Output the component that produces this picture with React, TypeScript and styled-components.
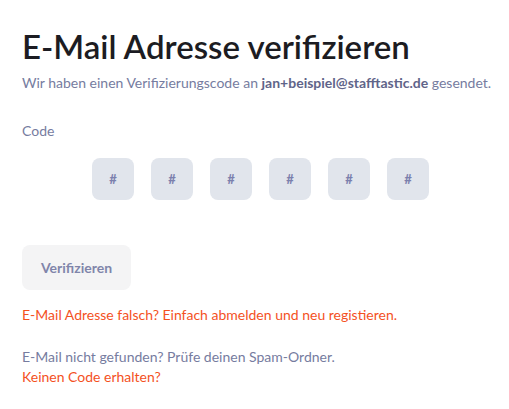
import React from "react";
import styled, { createGlobalStyle } from "styled-components";

const GlobalStyle = createGlobalStyle`
  html, body { margin: 0; padding: 0; background: #ffffff; }
  body { font-family: Lato, "Noto Sans", sans-serif; -webkit-font-smoothing: antialiased; }
`;

const Page = styled.main`
  padding: 27px 10px 0 22px;
  display: flex;
  flex-direction: column;
`;

const Title = styled.h1`
  margin: 0;
  font-size: 33px;
  line-height: 39px;
  font-weight: 600;
  color: #1c1c22;
`;

const Text = styled.p<{ $tone?: "muted" | "alert"; $mt?: number }>`
  margin: ${(p) => p.$mt ?? 0}px 0 0 0;
  font-size: 14px;
  line-height: 20px;
  color: ${(p) => (p.$tone === "alert" ? "#f4511e" : "#767ca0")};
`;

const Strong = styled.strong`
  font-weight: 700;
  color: #5f6489;
`;

const Label = styled.label`
  margin-top: 28px;
  font-size: 14px;
  line-height: 20px;
  color: #767ca0;
`;

const CodeRow = styled.div`
  margin-top: 17px;
  display: flex;
  justify-content: center;
  gap: 17px;
`;

const CodeBox = styled.div`
  width: 42px;
  height: 42px;
  border-radius: 8px;
  background: #e1e5ec;
  display: flex;
  align-items: center;
  justify-content: center;
  font-size: 13px;
  font-weight: 700;
  color: #7b80ad;
`;

const Button = styled.button`
  margin-top: 45px;
  align-self: flex-start;
  width: 109px;
  height: 45px;
  border: none;
  border-radius: 8px;
  background: #f4f4f5;
  font-family: inherit;
  font-size: 14px;
  font-weight: 700;
  color: #8085aa;
  padding: 0;
`;

const Block = styled.div`
  margin-top: 22px;
  display: flex;
  flex-direction: column;
`;

export default function App() {
  return (
    <>
      <GlobalStyle />
      <Page>
        <Title>E-Mail Adresse verifizieren</Title>
        <Text $mt={7}>
          Wir haben einen Verifizierungscode an <Strong>jan+beispiel@stafftastic.de</Strong> gesendet.
        </Text>
        <Label>Code</Label>
        <CodeRow>
          {Array.from({ length: 6 }).map((_, i) => (
            <CodeBox key={i}>#</CodeBox>
          ))}
        </CodeRow>
        <Button>Verifizieren</Button>
        <Text $tone="alert" $mt={15}>
          E-Mail Adresse falsch? Einfach abmelden und neu registieren.
        </Text>
        <Block>
          <Text>E-Mail nicht gefunden? Prüfe deinen Spam-Ordner.</Text>
          <Text $tone="alert">Keinen Code erhalten?</Text>
        </Block>
      </Page>
    </>
  );
}
